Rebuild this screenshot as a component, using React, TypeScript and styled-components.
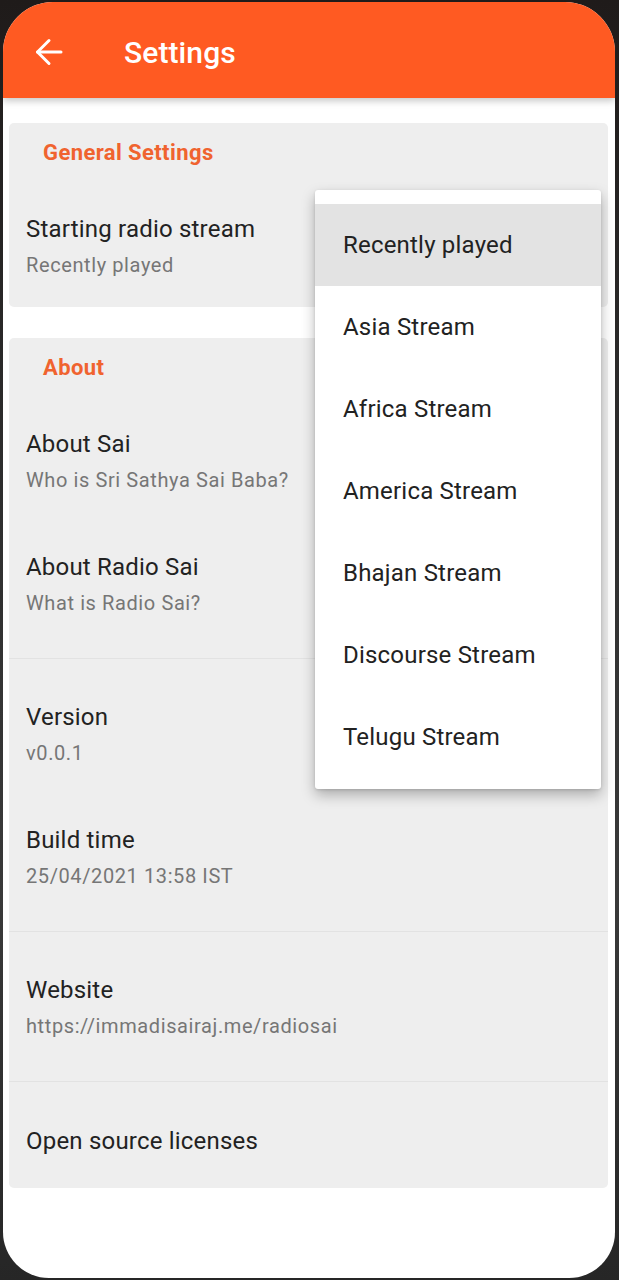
import React from "react";
import styled, { createGlobalStyle } from "styled-components";

const Global = createGlobalStyle`
  html, body { margin: 0; padding: 0; background: #2a2a2a; }
  body { font-family: Roboto, "Noto Sans", Arial, sans-serif; }
  * { box-sizing: border-box; }
`;

const Frame = styled.div`
  width: 619px;
  height: 1280px;
  padding: 2px 4px 2px 3px;
  background: linear-gradient(180deg, #1f1b1a 0%, #2f2f2f 40%, #3a3a3a 70%, #262626 100%);
`;

const Screen = styled.div`
  position: relative;
  height: 100%;
  background: #ffffff;
  border-radius: 50px 50px 46px 46px;
  overflow: hidden;
`;

const AppBar = styled.header`
  height: 96px;
  background: #ff5a22;
  display: flex;
  align-items: center;
  padding: 4px 0 0 31px;
  gap: 60px;
  box-shadow: 0 3px 7px rgba(0, 0, 0, 0.22);
  position: relative;
  z-index: 1;
`;

const Title = styled.h1`
  margin: 0;
  color: #fff;
  font-size: 30px;
  font-weight: 500;
  letter-spacing: 0.1px;
`;

const Content = styled.main`
  padding: 25px 7px 0 6px;
  display: flex;
  flex-direction: column;
  gap: 31px;
`;

const Card = styled.section`
  background: #eeeeee;
  border-radius: 5px;
`;

const CardHeader = styled.div`
  padding: 17px 34px 18px;
  line-height: 26px;
  font-size: 22px;
  font-weight: 700;
  letter-spacing: 0.4px;
  color: #f0632f;
`;

const Row = styled.div<{ $single?: boolean }>`
  padding: ${(p) => (p.$single ? "31px 17px 32px" : "30px 17px 29px")};
  display: flex;
  flex-direction: column;
  gap: 8px;
`;

const RowTitle = styled.div`
  font-size: 24px;
  line-height: 30px;
  letter-spacing: 0.2px;
  color: #222222;
`;

const RowSummary = styled.div`
  font-size: 20px;
  line-height: 26px;
  letter-spacing: 0.6px;
  color: #767676;
`;

const Divider = styled.hr`
  border: 0;
  height: 1px;
  margin: 13px 0;
  background: #e2e2e2;
`;

const Menu = styled.ul`
  position: absolute;
  left: 312px;
  top: 188px;
  width: 286px;
  margin: 0;
  padding: 14px 0 11px;
  list-style: none;
  background: #ffffff;
  border-radius: 3px;
  box-shadow: 0 6px 14px rgba(0, 0, 0, 0.28), 0 1px 3px rgba(0, 0, 0, 0.12);
  z-index: 2;
`;

const MenuItem = styled.li<{ $active?: boolean }>`
  height: 82px;
  display: flex;
  align-items: center;
  padding-left: 28px;
  font-size: 24px;
  letter-spacing: 0.2px;
  color: #222222;
  background: ${(p) => (p.$active ? "#e3e3e3" : "transparent")};
`;

const BackArrow = () => (
  <svg width="30" height="30" viewBox="0 0 30 30" fill="none" stroke="#fff" strokeWidth="3" strokeLinecap="round" strokeLinejoin="round">
    <path d="M27 15H3.5" />
    <path d="M15 3.5L3.5 15L15 26.5" />
  </svg>
);

const streams = [
  "Recently played",
  "Asia Stream",
  "Africa Stream",
  "America Stream",
  "Bhajan Stream",
  "Discourse Stream",
  "Telugu Stream",
];

export default function App() {
  return (
    <>
      <Global />
      <Frame>
        <Screen>
          <AppBar>
            <BackArrow />
            <Title>Settings</Title>
          </AppBar>
          <Content>
            <Card>
              <CardHeader>General Settings</CardHeader>
              <Row>
                <RowTitle>Starting radio stream</RowTitle>
                <RowSummary>Recently played</RowSummary>
              </Row>
            </Card>
            <Card>
              <CardHeader>About</CardHeader>
              <Row>
                <RowTitle>About Sai</RowTitle>
                <RowSummary>Who is Sri Sathya Sai Baba?</RowSummary>
              </Row>
              <Row>
                <RowTitle>About Radio Sai</RowTitle>
                <RowSummary>What is Radio Sai?</RowSummary>
              </Row>
              <Divider />
              <Row>
                <RowTitle>Version</RowTitle>
                <RowSummary>v0.0.1</RowSummary>
              </Row>
              <Row>
                <RowTitle>Build time</RowTitle>
                <RowSummary>25/04/2021 13:58 IST</RowSummary>
              </Row>
              <Divider />
              <Row>
                <RowTitle>Website</RowTitle>
                <RowSummary>https://immadisairaj.me/radiosai</RowSummary>
              </Row>
              <Divider />
              <Row $single>
                <RowTitle>Open source licenses</RowTitle>
              </Row>
            </Card>
          </Content>
          <Menu>
            {streams.map((s, i) => (
              <MenuItem key={s} $active={i === 0}>
                {s}
              </MenuItem>
            ))}
          </Menu>
        </Screen>
      </Frame>
    </>
  );
}
